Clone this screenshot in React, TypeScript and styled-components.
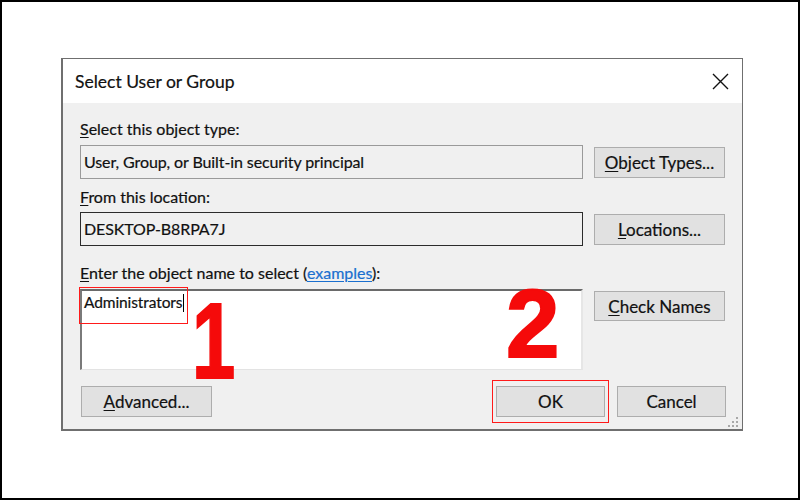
import React from "react";
import styled, { createGlobalStyle } from "styled-components";

const GlobalStyle = createGlobalStyle`
  html, body {
    margin: 0;
    padding: 0;
    background: #fff;
  }
  * {
    box-sizing: border-box;
  }
`;

const Page = styled.div`
  width: 800px;
  height: 500px;
  border: 2px solid #000;
  background: #fff;
  padding: 56px 0 0 59px;
  font-family: Lato, "Noto Sans", sans-serif;
  color: #111;
  -webkit-text-stroke: 0.2px #111;
`;

const Dialog = styled.div`
  position: relative;
  width: 682px;
  height: 373px;
  border: 1px solid #6f6f6f;
  border-left-width: 2px;
  border-bottom-width: 2px;
  background: #f0f0f0;
  display: flex;
  flex-direction: column;
`;

const TitleBar = styled.div`
  height: 44px;
  background: #fff;
  display: flex;
  align-items: center;
  justify-content: space-between;
  padding: 0 13px 0 12px;
`;

const Title = styled.div`
  font-size: 17.5px;
  line-height: 22px;
  padding-top: 1px;
`;

const CloseButton = styled.div`
  width: 18px;
  height: 18px;
  display: flex;
  align-items: center;
  justify-content: center;
`;

const Body = styled.div`
  flex: 1;
  padding: 17px 16px 12px 17px;
  display: flex;
  flex-direction: column;
`;

const Label = styled.div<{ $gap: number }>`
  font-size: 16px;
  line-height: 18px;
  height: 18px;
  margin-bottom: ${(p) => p.$gap}px;
  white-space: nowrap;
`;

const Row = styled.div<{ $after: number }>`
  display: flex;
  gap: 11px;
  align-items: flex-start;
  margin-bottom: ${(p) => p.$after}px;
`;

const Field = styled.div<{ $dark?: boolean }>`
  width: 503px;
  height: 34px;
  border: 1px solid ${(p) => (p.$dark ? "#2b2b2b" : "#9a9a9a")};
  background: #f0f0f0;
  padding: 6px 3px 0;
  font-size: 16px;
  letter-spacing: -0.1px;
  line-height: 20px;
  white-space: nowrap;
`;

const NameBox = styled.div`
  position: relative;
  width: 503px;
  height: 81px;
  flex-shrink: 0;
`;

const TextArea = styled.div`
  width: 100%;
  height: 100%;
  background: #fff;
  border-style: solid;
  border-width: 2px 2px 1px 2px;
  border-color: #6a6a6a #e6e6e6 #e3e3e3 #7a7a7a;
  padding: 2px 2px 0;
  font-size: 15.5px;
  letter-spacing: -0.1px;
  line-height: 18px;
`;

const Caret = styled.span`
  display: inline-block;
  width: 1px;
  height: 18px;
  background: #000;
  vertical-align: -4px;
  margin-left: 1px;
`;

const Button = styled.div<{ $width?: number; $height?: number; $offset?: number }>`
  position: relative;
  width: ${(p) => p.$width ?? 131}px;
  height: ${(p) => p.$height ?? 31}px;
  margin-top: ${(p) => p.$offset ?? 0}px;
  border: 1px solid #adadad;
  background: #e1e1e1;
  display: flex;
  align-items: center;
  justify-content: center;
  font-size: 17px;
  white-space: nowrap;
  flex-shrink: 0;
`;

const Key = styled.span`
  text-decoration: underline;
  text-underline-offset: 2px;
  text-decoration-thickness: 1px;
`;

const Link = styled.span`
  color: #1a6fcf;
  -webkit-text-stroke: 0.2px #1a6fcf;
  text-decoration: underline;
  text-underline-offset: 2px;
  text-decoration-thickness: 1px;
`;

const Footer = styled.div`
  display: flex;
  align-items: center;
  padding-left: 1px;
`;

const FooterRight = styled.div`
  margin-left: auto;
  display: flex;
  gap: 12px;
`;

const Highlight = styled.div<{
  $top: number;
  $left: number;
  $w: number;
  $h: number;
}>`
  position: absolute;
  z-index: 2;
  top: ${(p) => p.$top}px;
  left: ${(p) => p.$left}px;
  width: ${(p) => p.$w}px;
  height: ${(p) => p.$h}px;
  border: 1px solid #ff1a1a;
  pointer-events: none;
`;

const StepNumber = styled.div<{
  $top: number;
  $left: number;
  $size: number;
  $squeeze?: number;
}>`
  position: absolute;
  z-index: 3;
  top: ${(p) => p.$top}px;
  left: ${(p) => p.$left}px;
  font-family: "Liberation Sans", Arial, sans-serif;
  font-weight: 700;
  font-size: ${(p) => p.$size}px;
  line-height: 1;
  color: #f50a0a;
  -webkit-text-stroke: 2px #f50a0a;
  transform: scaleX(${(p) => p.$squeeze ?? 1});
  transform-origin: left top;
`;

const Grip = styled.svg`
  position: absolute;
  right: 3px;
  bottom: 1px;
`;

const ObjectSection = () => (
  <>
    <Label $gap={7}>
      <Key>S</Key>elect this object type:
    </Label>
    <Row $after={9}>
      <Field>User, Group, or Built-in security principal</Field>
      <Button $offset={2}>
        <span>
          <Key>O</Key>bject Types...
        </span>
      </Button>
    </Row>
    <Label $gap={6}>
      <Key>F</Key>rom this location:
    </Label>
    <Row $after={18}>
      <Field $dark>DESKTOP-B8RPA7J</Field>
      <Button $offset={2}>
        <span>
          <Key>L</Key>ocations...
        </span>
      </Button>
    </Row>
  </>
);

const NameSection = () => (
  <>
    <Label $gap={7}>
      <Key>E</Key>nter the object name to select (<Link>examples</Link>):
    </Label>
    <Row $after={16}>
      <NameBox>
        <TextArea>
          Administrators
          <Caret />
        </TextArea>
        <Highlight $top={-2} $left={-1} $w={109} $h={37} />
        <StepNumber $top={-2} $left={112} $size={108} $squeeze={0.72}>
          1
        </StepNumber>
        <StepNumber $top={-13} $left={426} $size={96}>
          2
        </StepNumber>
      </NameBox>
      <Button $offset={2} $height={30}>
        <span>
          <Key>C</Key>heck Names
        </span>
      </Button>
    </Row>
  </>
);

export default function App() {
  return (
    <>
      <GlobalStyle />
      <Page>
        <Dialog>
          <TitleBar>
            <Title>Select User or Group</Title>
            <CloseButton>
              <svg width="17" height="17" viewBox="0 0 17 17">
                <path
                  d="M1 1 L16 16 M16 1 L1 16"
                  stroke="#111"
                  strokeWidth="1.4"
                  fill="none"
                />
              </svg>
            </CloseButton>
          </TitleBar>
          <Body>
            <ObjectSection />
            <NameSection />
            <Footer>
              <Button>
                <span>
                  <Key>A</Key>dvanced...
                </span>
              </Button>
              <FooterRight>
                <Button $width={109}>
                  OK
                  <Highlight $top={-7} $left={-5} $w={117} $h={43} />
                </Button>
                <Button $width={109}>Cancel</Button>
              </FooterRight>
            </Footer>
          </Body>
          <Grip width="12" height="12" viewBox="0 0 12 12">
            {[
              [10, 2],
              [6, 6],
              [10, 6],
              [2, 10],
              [6, 10],
              [10, 10],
            ].map(([x, y]) => (
              <rect
                key={`${x}-${y}`}
                x={x - 1}
                y={y - 1}
                width="2"
                height="2"
                fill="#a8a8a8"
              />
            ))}
          </Grip>
        </Dialog>
      </Page>
    </>
  );
}
